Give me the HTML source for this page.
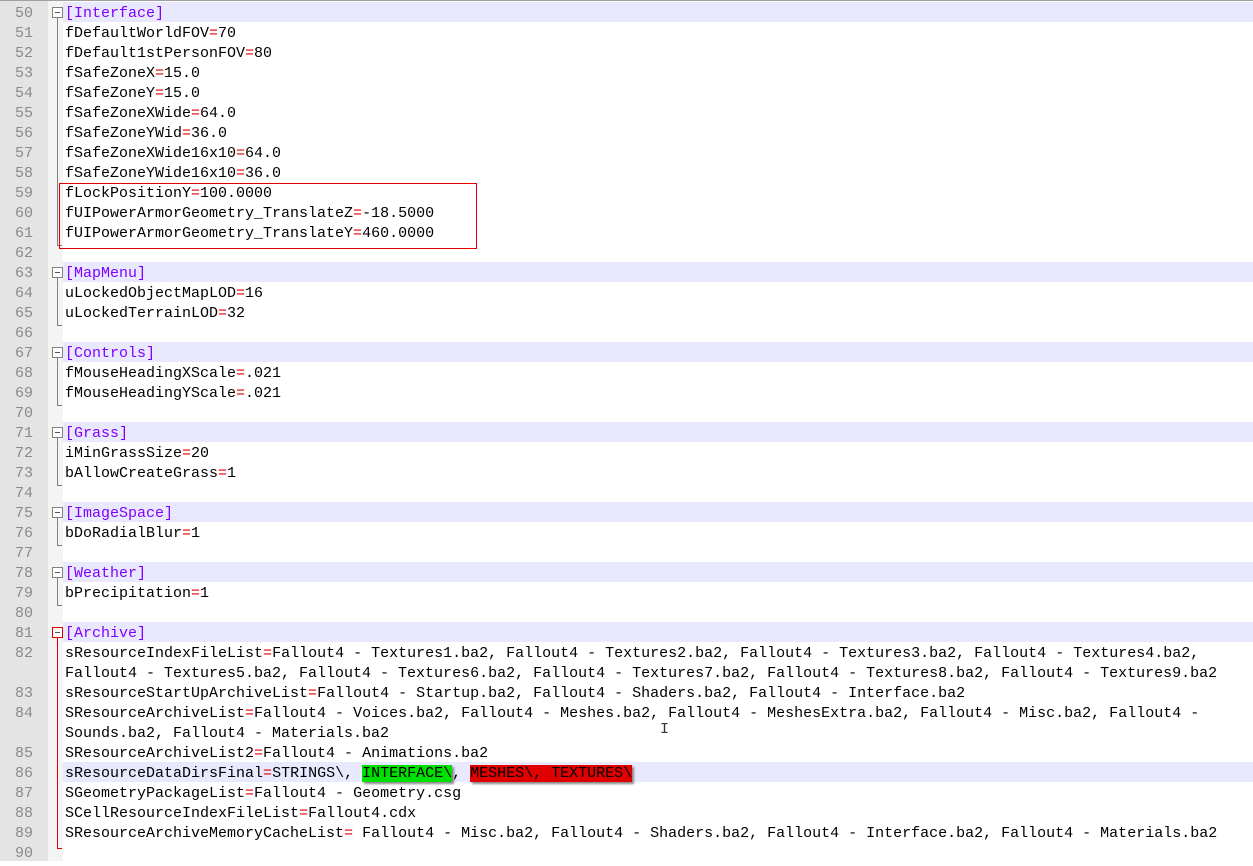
<!DOCTYPE html>
<html><head><meta charset="utf-8"><style>
body{margin:0;width:1253px;height:861px;overflow:hidden;background:#fff;font-family:"Liberation Mono",monospace;font-size:15px;position:relative}
#gut{position:absolute;left:0;top:0;width:48px;height:861px;background:#e4e4e4}
#fold{position:absolute;left:48px;top:0;width:15px;height:861px;background:#f4f4f4}
#top{position:absolute;left:0;top:0;width:1253px;height:1px;background:#a0a0a0}
.r{position:absolute;left:0;height:20px;width:1253px;line-height:24px;white-space:pre}
.n{position:absolute;left:0;width:33px;text-align:right;color:#8a8a8a;font-size:15px}
.t{position:absolute;left:65px;color:#000}
.h{position:absolute;left:63px;right:0;top:0;height:20px;background:#e8e8ff}
.s{color:#8000ff}
.e{color:#e00000}
.v{position:absolute;left:57px;width:1px;background:#808080}
.bx{position:absolute;left:52px;width:9px;height:9px;border:1px solid #808080;background:#fff}
.bx:after{content:"";position:absolute;left:2px;top:4px;width:5px;height:1px;background:#555}
.end{position:absolute;left:57px;width:5px;height:1px;background:#808080}
</style></head><body>
<div id="gut"></div><div id="fold"></div><div id="top"></div>
<div id="c"></div>
<script>
var L=[
[50,'[Interface]',1],[51,'fDefaultWorldFOV=70'],[52,'fDefault1stPersonFOV=80'],[53,'fSafeZoneX=15.0'],[54,'fSafeZoneY=15.0'],[55,'fSafeZoneXWide=64.0'],[56,'fSafeZoneYWid=36.0'],[57,'fSafeZoneXWide16x10=64.0'],[58,'fSafeZoneYWide16x10=36.0'],[59,'fLockPositionY=100.0000'],[60,'fUIPowerArmorGeometry_TranslateZ=-18.5000'],[61,'fUIPowerArmorGeometry_TranslateY=460.0000'],[62,'',2],
[63,'[MapMenu]',1],[64,'uLockedObjectMapLOD=16'],[65,'uLockedTerrainLOD=32'],[66,'',2],
[67,'[Controls]',1],[68,'fMouseHeadingXScale=.021'],[69,'fMouseHeadingYScale=.021'],[70,'',2],
[71,'[Grass]',1],[72,'iMinGrassSize=20'],[73,'bAllowCreateGrass=1'],[74,'',2],
[75,'[ImageSpace]',1],[76,'bDoRadialBlur=1'],[77,'',2],
[78,'[Weather]',1],[79,'bPrecipitation=1'],[80,'',2],
[81,'[Archive]',3],
[82,'sResourceIndexFileList=Fallout4 - Textures1.ba2, Fallout4 - Textures2.ba2, Fallout4 - Textures3.ba2, Fallout4 - Textures4.ba2,'],
['', 'Fallout4 - Textures5.ba2, Fallout4 - Textures6.ba2, Fallout4 - Textures7.ba2, Fallout4 - Textures8.ba2, Fallout4 - Textures9.ba2',4],
[83,'sResourceStartUpArchiveList=Fallout4 - Startup.ba2, Fallout4 - Shaders.ba2, Fallout4 - Interface.ba2'],
[84,'SResourceArchiveList=Fallout4 - Voices.ba2, Fallout4 - Meshes.ba2, Fallout4 - MeshesExtra.ba2, Fallout4 - Misc.ba2, Fallout4 -'],
['','Sounds.ba2, Fallout4 - Materials.ba2',4],
[85,'SResourceArchiveList2=Fallout4 - Animations.ba2'],
[86,'',5],
[87,'SGeometryPackageList=Fallout4 - Geometry.csg'],
[88,'SCellResourceIndexFileList=Fallout4.cdx'],
[89,'SResourceArchiveMemoryCacheList= Fallout4 - Misc.ba2, Fallout4 - Shaders.ba2, Fallout4 - Interface.ba2, Fallout4 - Materials.ba2'],
[90,'',6]];
var h='',start=0;
function esc(s){return s.replace(/&/g,'&amp;').replace(/</g,'&lt;')}
for(var i=0;i<L.length;i++){
 var y=2+i*20,n=L[i][0],s=L[i][1],k=L[i][2]||0,txt;
 if(k==1||k==3){txt='<span class="s">'+esc(s)+'</span>';}
 else if(k==5){txt='sResourceDataDirsFinal<span class="e">=</span>STRINGS\\, <span style="background:#00e000;box-shadow:2px 2px 2px #888">INTERFACE\\</span>, <span style="background:#e00000;box-shadow:2px 2px 2px #888">MESHES\\, TEXTURES\\</span>';}
 else {var p=s.indexOf('=');txt=p>=0?esc(s.slice(0,p))+'<span class="e">=</span>'+esc(s.slice(p+1)):esc(s);}
 h+='<div class="r" style="top:'+y+'px">'+((k==1||k==3||k==5)?'<div class="h"></div>':'')+'<span class="n">'+n+'</span><span class="t">'+txt+'</span></div>';
 if(k==1||k==3){start=y;var col=k==3?'#e00000':'#808080';h+='<div class="bx" style="top:'+(y+5)+'px;border-color:'+col+'"></div>';}
 if(k==2){h+='<div class="v" style="top:'+(start+16)+'px;height:'+(y-start-12)+'px"></div><div class="end" style="top:'+(y+3)+'px"></div>';}
 if(k==6){h+='<div class="v" style="top:'+(start+16)+'px;height:'+(y-start-9)+'px;background:#e00000"></div><div class="end" style="top:'+(y+6)+'px;background:#e00000"></div>';}
}
h+='<div style="position:absolute;left:59px;top:183px;width:416px;height:64px;border:1px solid #e00000"></div>';
h+='<div style="position:absolute;left:660px;top:721px;font-size:15px;color:#333">I</div>';
document.getElementById('c').innerHTML=h;
</script>
</body></html>
